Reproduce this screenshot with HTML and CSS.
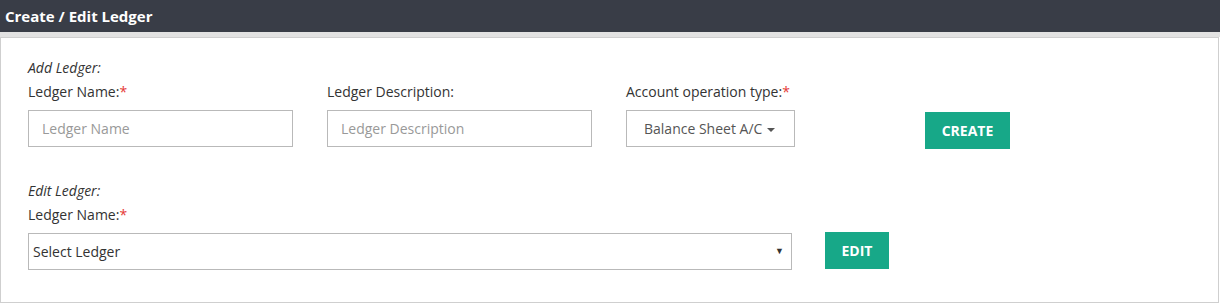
FILE: index.html
```html
<!DOCTYPE html>
<html lang="en">
<head>
    <meta charset="UTF-8">
    <meta name="viewport" content="width=device-width, initial-scale=1.0">
    <title>Create / Edit Ledger</title>
    <link rel="stylesheet" href="styles.css">
</head>
<body>
    <header class="page-title">
        <h1>Create / Edit Ledger</h1>
    </header>

    <div class="title-strip"></div>

    <main class="panel">
        <section class="ledger-block">
            <p class="block-title">Add Ledger:</p>
            <div class="form-row">
                <div class="field">
                    <label for="ledgerName">Ledger Name:<span class="req">*</span></label>
                    <input type="text" id="ledgerName" placeholder="Ledger Name">
                </div>
                <div class="field">
                    <label for="ledgerDesc">Ledger Description:</label>
                    <input type="text" id="ledgerDesc" placeholder="Ledger Description">
                </div>
                <div class="field">
                    <label>Account operation type:<span class="req">*</span></label>
                    <button class="dropdown-toggle" type="button">Balance Sheet A/C <span class="caret"></span></button>
                </div>
                <div class="field action">
                    <button class="btn btn-create" type="button">CREATE</button>
                </div>
            </div>
        </section>

        <section class="ledger-block">
            <p class="block-title">Edit Ledger:</p>
            <label for="ledgerSelect">Ledger Name:<span class="req">*</span></label>
            <div class="edit-row">
                <div class="select-box">
                    <select id="ledgerSelect">
                        <option>Select Ledger</option>
                    </select>
                    <span class="select-arrow">&#9660;</span>
                </div>
                <button class="btn btn-edit" type="button">EDIT</button>
            </div>
        </section>
    </main>
</body>
</html>
```

FILE: styles.css
```css
body {
    font-family: 'Open Sans', 'Liberation Sans', sans-serif;
    font-size: 14px;
    margin: 0;
    padding: 0;
    background-color: #fff;
    color: #333;
}

.page-title {
    background-color: #393d47;
    color: #fff;
    height: 32px;
    display: flex;
    align-items: center;
    padding: 0 5px;
}

.page-title h1 {
    margin: 0;
    font-size: 15px;
    font-weight: 700;
    line-height: 20px;
}

.title-strip {
    height: 5px;
    background-color: #e2e2e2;
}

.panel {
    border: 1px solid #cfcfcf;
    margin-right: 1px;
    padding: 18px 28px 32px 27px;
}

.block-title {
    margin: 0;
    font-style: italic;
    line-height: 24px;
}

label {
    display: block;
    line-height: 24px;
    margin-bottom: 6px;
}

.req {
    color: #e53935;
}

.form-row {
    display: grid;
    grid-template-columns: 265px 265px 265px 265px;
    column-gap: 34px;
}

.field input {
    box-sizing: border-box;
    width: 265px;
    height: 37px;
    border: 1px solid #b9b9b9;
    padding: 0 13px;
    font-family: inherit;
    font-size: 14px;
    color: #333;
    outline: none;
}

.field input::placeholder {
    color: #999;
}

.dropdown-toggle {
    box-sizing: border-box;
    height: 37px;
    width: 169px;
    background-color: #fff;
    border: 1px solid #b9b9b9;
    font-family: inherit;
    font-size: 14px;
    color: #555;
    padding: 0 16px 0 17px;
    text-align: left;
    cursor: pointer;
}

.caret {
    display: inline-block;
    width: 0;
    height: 0;
    margin-left: 1px;
    vertical-align: middle;
    border-top: 4px solid #555;
    border-left: 4px solid transparent;
    border-right: 4px solid transparent;
}

.action {
    display: flex;
    align-items: flex-end;
}

.btn {
    background-color: #17a888;
    color: #fff;
    border: none;
    font-family: inherit;
    font-size: 14px;
    font-weight: 700;
    cursor: pointer;
}

.btn-create {
    width: 85px;
    height: 37px;
    margin-bottom: -2px;
}

.ledger-block + .ledger-block {
    margin-top: 32px;
}

.edit-row {
    display: flex;
    gap: 33px;
    align-items: flex-start;
}

.select-box {
    position: relative;
    width: 764px;
}

.select-box select {
    box-sizing: border-box;
    width: 100%;
    height: 37px;
    border: 1px solid #b9b9b9;
    background-color: #fff;
    font-family: inherit;
    font-size: 14px;
    color: #333;
    padding: 0 4px;
    appearance: none;
    -webkit-appearance: none;
    outline: none;
}

.select-arrow {
    position: absolute;
    right: 8px;
    top: 11px;
    font-size: 9px;
    color: #333;
    pointer-events: none;
}

.btn-edit {
    width: 64px;
    height: 37px;
    margin-top: -1px;
}
```
